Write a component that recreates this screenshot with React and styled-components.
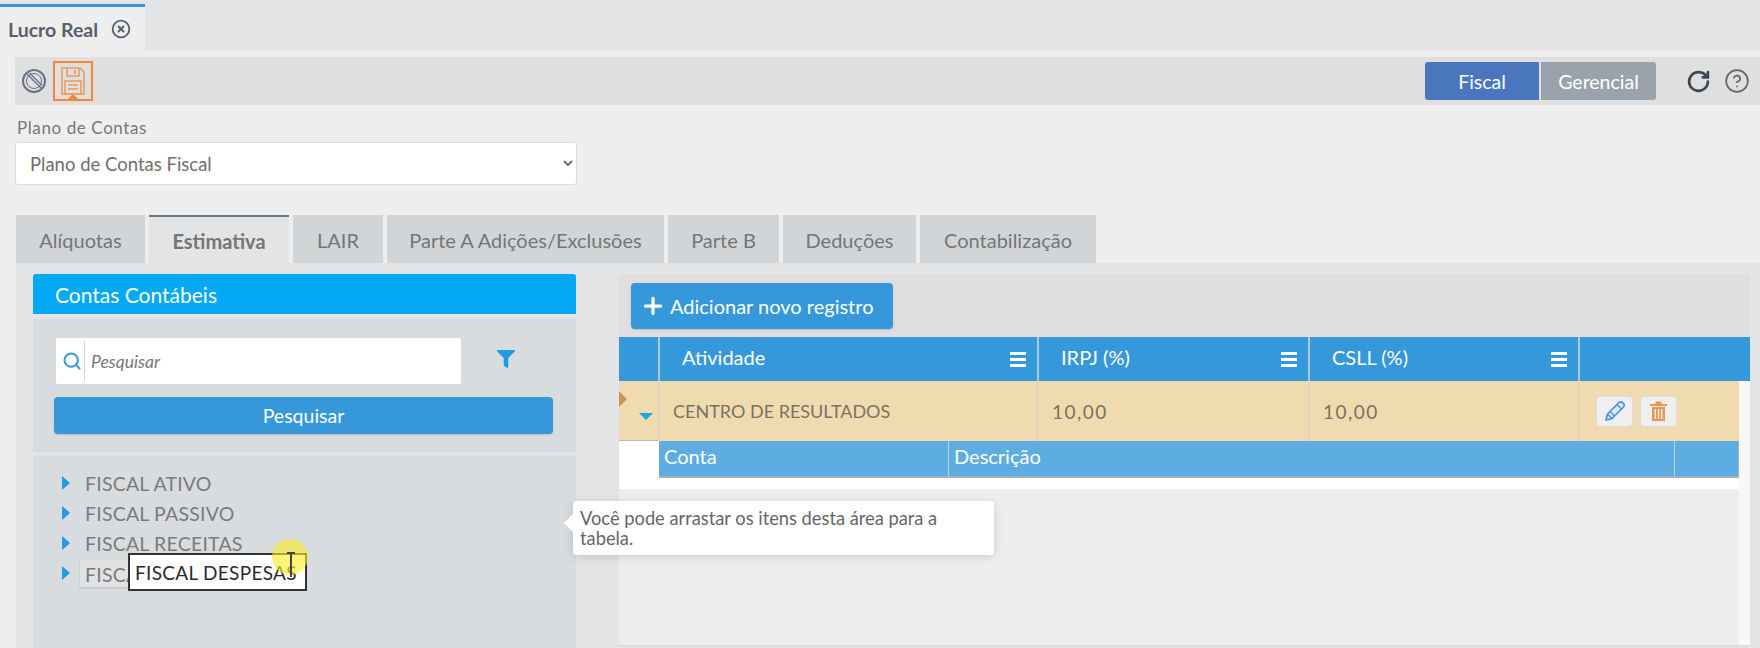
import React from 'react';
import styled, { createGlobalStyle } from 'styled-components';
import { RotateCw, CircleHelp, CircleX, Search, Plus } from 'lucide-react';
import { FaFilter } from 'react-icons/fa';

const GlobalStyle = createGlobalStyle`
    html, body {
        margin: 0;
        padding: 0;
        background-color: #eeeeee;
    }
    * {
        box-sizing: border-box;
    }
`;

const Page = styled.div`
    width: 1760px;
    height: 648px;
    overflow: hidden;
    position: relative;
    font-family: Lato, "Liberation Sans", sans-serif;
    color: #6f6f6f;
    background-color: #eeeeee;
`;

const TabBar = styled.div`
    height: 51px;
    padding-top: 4px;
    background-color: #e3e4e5;
    display: flex;
`;
const TopTab = styled.div`
    width: 145px;
    background-color: #eeeeee;
    border-top: 3px solid #3598db;
    padding-left: 8px;
    display: flex;
    align-items: center;
    gap: 13px;
    font-size: 19.5px;
    font-weight: 700;
    color: #555f6e;
`;

const Main = styled.div`
    padding: 6px 0 0 15px;
`;
const Toolbar = styled.div`
    height: 48px;
    background-color: #dfdfdf;
    display: flex;
    align-items: center;
    padding: 0 10px 0 6px;
`;
const SaveButton = styled.div`
    width: 40px;
    height: 40px;
    margin-left: 6px;
    border: 2px solid #f0873a;
    position: relative;
    display: flex;
    align-items: center;
    justify-content: center;
    &::after {
        content: '';
        position: absolute;
        left: 13px;
        bottom: 0;
        border: 5px solid transparent;
        border-top: 0;
        border-bottom-color: #f0873a;
    }
`;
const Toggle = styled.div`
    margin-left: auto;
    display: flex;
    gap: 2px;
`;
const ToggleButton = styled.div`
    width: ${props => props.$width}px;
    height: 38px;
    background-color: ${props => props.$active ? '#4a76bd' : '#9aa3ac'};
    border-radius: ${props => props.$active ? '3px 0 0 3px' : '0 3px 3px 0'};
    color: #ffffff;
    font-size: 19.5px;
    display: flex;
    align-items: center;
    justify-content: center;
`;
const ToolIcons = styled.div`
    display: flex;
    align-items: center;
    gap: 13px;
    margin-left: 30px;
    color: #3c4858;
`;

const FieldLabel = styled.label`
    display: block;
    margin-top: 13px;
    margin-left: 2px;
    font-size: 17px;
    line-height: 20px;
    letter-spacing: 0.6px;
    color: #777777;
`;
const Select = styled.select`
    display: block;
    width: 562px;
    height: 43px;
    margin: 4px 0 0 0;
    padding-left: 10px;
    background-color: #ffffff;
    border: 1px solid #dddddd;
    border-radius: 3px;
    font-family: Lato, "Liberation Sans", sans-serif;
    font-size: 18.5px;
    color: #6f6f6f;
`;

const Tabs = styled.div`
    display: flex;
    gap: 4px;
    margin: 30px 0 0 1px;
    height: 48px;
`;
const Tab = styled.div`
    width: ${props => props.$width}px;
    background-color: ${props => props.$active ? '#e3e4e5' : '#d2d5d8'};
    border-top: 2px solid ${props => props.$active ? '#6f7583' : '#d2d5d8'};
    font-size: 20px;
    font-weight: ${props => props.$active ? 700 : 400};
    padding-top: ${props => props.$active ? 2 : 0}px;
    color: #757575;
    display: flex;
    align-items: center;
    justify-content: center;
`;

const Content = styled.div`
    height: 385px;
    margin-left: 1px;
    padding: 11px 9px 0 17px;
    background-color: #e3e4e5;
    display: grid;
    grid-template-columns: 543px 1131px;
    column-gap: 43px;
`;

const LeftPanel = styled.div`
    background-color: #d9dcdf;
    height: 374px;
`;
const PanelTitle = styled.div`
    height: 40px;
    background-color: #03a9f5;
    border-radius: 3px 3px 0 0;
    padding-left: 22px;
    display: flex;
    align-items: center;
    font-size: 21px;
    color: #ffffff;
`;
const SearchArea = styled.div`
    border-top: 5px solid #e3e4e5;
    border-bottom: 4px solid #e3e4e5;
    height: 142px;
    padding: 19px 23px 0 21px;
`;
const SearchRow = styled.div`
    display: flex;
    align-items: center;
`;
const SearchBox = styled.div`
    width: 405px;
    height: 46px;
    margin-left: 2px;
    background-color: #ffffff;
    border-radius: 2px;
    display: flex;
    align-items: center;
    padding-left: 6px;
    color: #3598db;
`;
const SearchDivider = styled.span`
    width: 1px;
    height: 40px;
    margin: 0 6px 0 2px;
    background-color: #d5d5d5;
`;
const Placeholder = styled.span`
    font-size: 17.5px;
    font-style: italic;
    color: #777777;
`;
const FilterButton = styled.div`
    margin-left: 36px;
    margin-top: -4px;
    display: flex;
    color: #1f9be8;
`;
const BlueButton = styled.div`
    background-color: #3598db;
    border-radius: 4px;
    color: #ffffff;
    font-size: 20px;
    display: flex;
    align-items: center;
    justify-content: center;
    box-shadow: 0 1px 2px rgba(0, 0, 0, 0.15);
`;
const SearchButton = styled(BlueButton)`
    height: 37px;
    margin-top: 13px;
    font-size: 19.5px;
`;

const Tree = styled.div`
    padding: 12px 0 0 29px;
    position: relative;
`;
const TreeRow = styled.div`
    height: 30px;
    display: flex;
    align-items: center;
    font-size: 19.5px;
    letter-spacing: 0.2px;
    color: #7b7b7b;
`;
const TreeArrow = styled.span`
    width: 0;
    height: 0;
    border-left: 8px solid #1f9be8;
    border-top: 7px solid transparent;
    border-bottom: 7px solid transparent;
    margin-right: 15px;
`;
const TreeLabel = styled.span`
    padding: 0 0 0 5px;
    margin-left: -5px;
    white-space: nowrap;
    ${props => props.$hover && `
        height: 27px;
        line-height: 29px;
        background-color: #e0e2e4;
        box-shadow: 0 1px 2px rgba(0, 0, 0, 0.15);
    `}
`;
const NativeTip = styled.div`
    position: absolute;
    left: 95px;
    top: 97px;
    width: 179px;
    height: 38px;
    background-color: #ffffff;
    border: 2px solid #333333;
    padding-left: 5px;
    display: flex;
    align-items: center;
    font-size: 19px;
    letter-spacing: 0.3px;
    white-space: nowrap;
    color: #2a2a2a;
`;
const CursorHalo = styled.div`
    position: absolute;
    left: 239px;
    top: 83px;
    width: 36px;
    height: 36px;
    border-radius: 50%;
    background-color: rgba(250, 235, 40, 0.62);
`;
const CursorBeam = styled.div`
    position: absolute;
    left: 254px;
    top: 96px;
    width: 8px;
    height: 25px;
    border-top: 2px solid #444444;
    &::after {
        content: '';
        display: block;
        width: 1.5px;
        height: 23px;
        margin-left: 3px;
        background-color: #444444;
    }
`;

const RightPanel = styled.div`
    display: flex;
    flex-direction: column;
`;
const GridToolbar = styled.div`
    height: 63px;
    padding: 9px 12px;
    background-color: #dfdfdf;
`;
const AddButton = styled(BlueButton)`
    width: 262px;
    height: 46px;
    gap: 4px;
    justify-content: flex-start;
    padding-left: 9px;
`;
const HeaderRow = styled.div`
    height: 44px;
    background-color: #3598db;
    display: grid;
    grid-template-columns: 39px 379px 271px 270px 172px;
    color: #ffffff;
    font-size: 20px;
`;
const HeaderCell = styled.div`
    display: flex;
    align-items: center;
    justify-content: space-between;
    padding: 0 11px 5px 22px;
    border-left: ${props => props.$first ? 'none' : '2px solid #a9c7dd'};
`;
const HeaderMenu = styled.span`
    display: flex;
    margin-top: 5px;
`;
const DetailArea = styled.div`
    height: 266px;
    padding-right: 11px;
    background-color: #f8f8f8;
    border-bottom: 2px solid #dddddd;
`;
const DataRow = styled.div`
    height: 60px;
    background-color: #f0dbb0;
    display: grid;
    grid-template-columns: 39px 379px 271px 270px 161px;
    font-size: 18px;
    color: #7c7261;
`;
const DataCell = styled.div`
    display: flex;
    align-items: center;
    gap: 7px;
    padding-left: ${props => props.$pad ?? 14}px;
    border-left: 1px solid #d6d0c0;
`;
const Percent = styled.span`
    font-size: 19px;
    letter-spacing: 1.5px;
`;
const ExpandCell = styled.div`
    position: relative;
    border-bottom: 1px solid #b9b9b9;
    &::before {
        content: '';
        position: absolute;
        left: 0;
        top: 10px;
        border-left: 8px solid #c9935a;
        border-top: 8px solid transparent;
        border-bottom: 8px solid transparent;
    }
    &::after {
        content: '';
        position: absolute;
        left: 20px;
        top: 32px;
        border-top: 7px solid #1fa5e8;
        border-left: 7px solid transparent;
        border-right: 7px solid transparent;
    }
`;
const IconButton = styled.div`
    width: 37px;
    height: 31px;
    background-color: #efefef;
    border: 1px solid #dcdcdc;
    border-radius: 4px;
    display: flex;
    align-items: center;
    justify-content: center;
`;
const DetailWhite = styled.div`
    height: 48px;
    padding-left: 40px;
    background-color: #ffffff;
`;
const SubHeader = styled.div`
    height: 37px;
    background-color: #5dade2;
    border-bottom: 2px solid #a9b0b8;
    border-right: 1px solid #a9b0b8;
    display: grid;
    grid-template-columns: 289px 726px 1fr;
    color: #ffffff;
    font-size: 20px;
`;
const SubCell = styled.div`
    padding: 3px 0 0 5px;
    border-left: ${props => props.$first ? 'none' : '1px solid #b9d4e8'};
`;
const DetailEmpty = styled.div`
    height: 156px;
    background-color: #eeeeee;
`;

const HintTip = styled.div`
    position: absolute;
    left: 573px;
    top: 501px;
    width: 421px;
    height: 54px;
    padding: 7px;
    background-color: #ffffff;
    border-radius: 3px;
    box-shadow: 0 2px 10px rgba(0, 0, 0, 0.15);
    font-size: 18.3px;
    line-height: 20px;
    color: #666666;
    &::before {
        content: '';
        position: absolute;
        left: -9px;
        top: 13px;
        border-right: 9px solid #ffffff;
        border-top: 9px solid transparent;
        border-bottom: 9px solid transparent;
    }
`;

const BanIcon = () => (
    <svg width="26" height="26" viewBox="0 0 26 26" fill="none" stroke="#69728a" strokeWidth="2">
        <circle cx="13" cy="13" r="11" />
        <circle cx="13" cy="13" r="7.5" strokeWidth="1" />
        <path d="M6 6 L20 20 M8.5 5 L21 17.5" strokeWidth="1.3" />
    </svg>
);

const SaveIcon = () => (
    <svg width="24" height="28" viewBox="0 0 24 28" fill="none" stroke="#ee9a5c" strokeWidth="1.6">
        <path d="M1 1 H19 L23 5 V27 H1 Z" />
        <path d="M6 1 V9 H18 V1 M14 3 V7" />
        <path d="M4 14 H20 V27 H4 Z" />
        <path d="M7 18 H17 M7 22 H17" />
    </svg>
);

const PencilIcon = () => (
    <svg width="22" height="22" viewBox="0 0 22 22" fill="#dcebf8" stroke="#4a90d9" strokeWidth="1.7" strokeLinejoin="round">
        <path d="M2 20 L3.5 14 L15 2.5 Q16.5 1.2 18 2.2 L20 4.2 Q20.8 5.6 19.5 7 L8 18.5 Z" />
        <path d="M3.5 14 L8 18.5 M6 11.5 L10.5 16 M13 4.5 L17.5 9" strokeWidth="1.2" />
    </svg>
);

const TrashIcon = () => (
    <svg width="17" height="21" viewBox="0 0 17 21" fill="#e8954f">
        <rect x="0" y="3" width="17" height="2" />
        <rect x="5.5" y="0.5" width="6" height="2.5" />
        <path d="M2 6 H15 V20 H2 Z M4.5 8 V18 H6 V8 Z M7.8 8 V18 H9.3 V8 Z M11 8 V18 H12.5 V8 Z" fillRule="evenodd" />
    </svg>
);

const MenuIcon = () => (
    <HeaderMenu>
        <svg width="16" height="15" viewBox="0 0 16 15" fill="#ffffff">
            <rect y="0" width="16" height="3" />
            <rect y="6" width="16" height="3" />
            <rect y="12" width="16" height="3" />
        </svg>
    </HeaderMenu>
);

const tabs = [
    ['Alíquotas', 129],
    ['Estimativa', 140, true],
    ['LAIR', 90],
    ['Parte A Adições/Exclusões', 277],
    ['Parte B', 111],
    ['Deduções', 133],
    ['Contabilização', 176],
];

const treeItems = ['FISCAL ATIVO', 'FISCAL PASSIVO', 'FISCAL RECEITAS'];

const App = () => {
    return (
        <Page>
            <GlobalStyle />
            <TabBar>
                <TopTab>
                    Lucro Real
                    <CircleX size={20} strokeWidth={2.2} />
                </TopTab>
            </TabBar>
            <Main>
                <Toolbar>
                    <BanIcon />
                    <SaveButton>
                        <SaveIcon />
                    </SaveButton>
                    <Toggle>
                        <ToggleButton $active $width={114}>Fiscal</ToggleButton>
                        <ToggleButton $width={115}>Gerencial</ToggleButton>
                    </Toggle>
                    <ToolIcons>
                        <RotateCw size={25} strokeWidth={2.6} />
                        <CircleHelp size={26} strokeWidth={1.6} color="#666666" />
                    </ToolIcons>
                </Toolbar>
                <FieldLabel>Plano de Contas</FieldLabel>
                <Select defaultValue="fiscal">
                    <option value="fiscal">Plano de Contas Fiscal</option>
                </Select>
                <Tabs>
                    {tabs.map(([label, width, active]) => (
                        <Tab key={label} $width={width} $active={active}>{label}</Tab>
                    ))}
                </Tabs>
                <Content>
                    <LeftPanel>
                        <PanelTitle>Contas Contábeis</PanelTitle>
                        <SearchArea>
                            <SearchRow>
                                <SearchBox>
                                    <Search size={20} strokeWidth={2.4} />
                                    <SearchDivider />
                                    <Placeholder>Pesquisar</Placeholder>
                                </SearchBox>
                                <FilterButton>
                                    <FaFilter size={18} />
                                </FilterButton>
                            </SearchRow>
                            <SearchButton>Pesquisar</SearchButton>
                        </SearchArea>
                        <Tree>
                            {treeItems.map(item => (
                                <TreeRow key={item}>
                                    <TreeArrow />
                                    <TreeLabel>{item}</TreeLabel>
                                </TreeRow>
                            ))}
                            <TreeRow>
                                <TreeArrow />
                                <TreeLabel $hover>FISCAL DESPESAS</TreeLabel>
                            </TreeRow>
                            <NativeTip>FISCAL DESPESAS</NativeTip>
                            <CursorHalo />
                            <CursorBeam />
                        </Tree>
                    </LeftPanel>
                    <RightPanel>
                        <GridToolbar>
                            <AddButton>
                                <Plus size={26} strokeWidth={3} />
                                Adicionar novo registro
                            </AddButton>
                        </GridToolbar>
                        <HeaderRow>
                            <HeaderCell $first />
                            <HeaderCell>Atividade<MenuIcon /></HeaderCell>
                            <HeaderCell>IRPJ (%)<MenuIcon /></HeaderCell>
                            <HeaderCell>CSLL (%)<MenuIcon /></HeaderCell>
                            <HeaderCell />
                        </HeaderRow>
                        <DetailArea>
                            <DataRow>
                                <ExpandCell />
                                <DataCell>CENTRO DE RESULTADOS</DataCell>
                                <DataCell><Percent>10,00</Percent></DataCell>
                                <DataCell><Percent>10,00</Percent></DataCell>
                                <DataCell $pad={17}>
                                    <IconButton>
                                        <PencilIcon />
                                    </IconButton>
                                    <IconButton>
                                        <TrashIcon />
                                    </IconButton>
                                </DataCell>
                            </DataRow>
                            <DetailWhite>
                                <SubHeader>
                                    <SubCell $first>Conta</SubCell>
                                    <SubCell>Descrição</SubCell>
                                    <SubCell />
                                </SubHeader>
                            </DetailWhite>
                            <DetailEmpty />
                        </DetailArea>
                    </RightPanel>
                </Content>
            </Main>
            <HintTip>Você pode arrastar os itens desta área para a<br />tabela.</HintTip>
        </Page>
    );
};

export default App;
